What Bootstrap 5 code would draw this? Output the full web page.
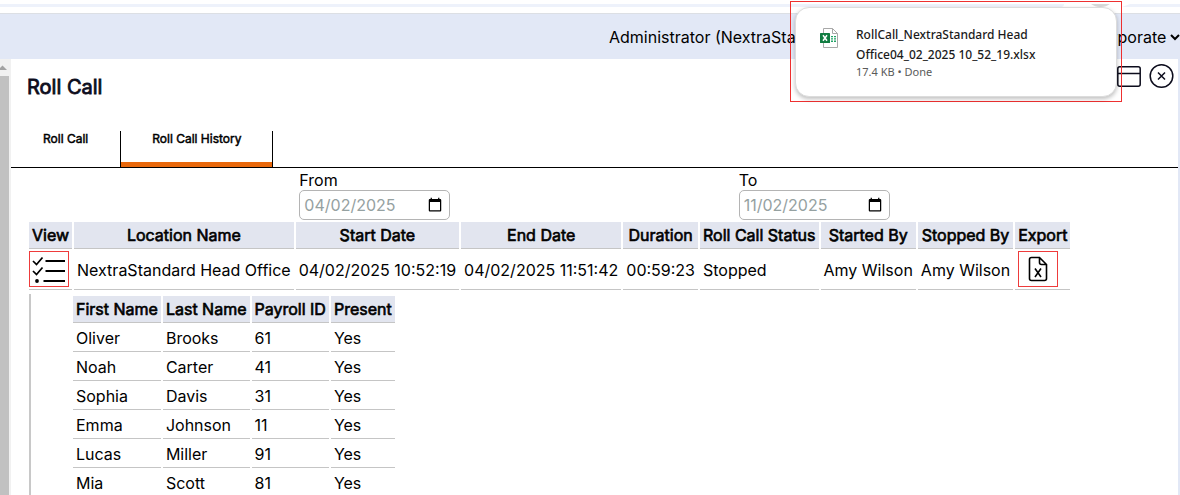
<!DOCTYPE html>
<html lang="en">
<head>
<meta charset="utf-8">
<meta name="viewport" content="width=device-width, initial-scale=1">
<title>Roll Call</title>
<link href="https://cdn.jsdelivr.net/npm/bootstrap@5.3.0/dist/css/bootstrap.min.css" rel="stylesheet">
<style>
  body { font-family: Inter, "Liberation Sans", sans-serif; font-size: 16px; line-height: 24px; color: #000; background: #fff; }
  .shell { height: 100vh; }
  .chrome-strip { height: 14px; border-bottom: 1px solid #dcdfe4; padding-top: 4px; }
  .strip-line { height: 3px; background: #eef2fb; border-radius: 0 0 12px 0; }
  .strip-end { width: 116px; height: 3px; }
  .topbar { height: 45px; background: #e2e8f6; }
  .user-name { width: 477px; }
  .site-select { border: 0; background: transparent; color: #000; padding: 0; margin-right: -3px; }
  .scroll-rail { width: 11px; background: #f1f1f1; }
  .scroll-thumb { width: 9px; background: #c1c1c1; }
  .scroll-up { width: 9px; height: 17px; }
  .main-pane { border-right: 2px solid #e2e8f6; min-width: 0; }
  .faux-bold { font-weight: 400; -webkit-text-stroke: .04em currentColor; }
  .page-title { font-size: 20px; line-height: 24px; color: #0c0c1c; margin: 0; padding-top: 12px; }
  .head-row { height: 72px; padding: 4px 4px 0 16px; }
  .tool-btn { border: 0; background: none; padding: 0; line-height: 0; }
  .tab-strip { height: 37px; border-bottom: 1px solid #000; }
  .tab-btn { display: block; border: 0; background: none; padding: 0 32px 15px; font-size: 12px; line-height: 16px; color: #000; height: 36px; border-bottom: 5px solid transparent; }
  .tab-btn.current { border-bottom-color: #e8680c; padding-left: 31px; padding-right: 31px; }
  .tab-cell { border: solid #000; border-width: 0 1px; }
  .filter-form { padding-top: 2px; }
  .filter-label { line-height: 20px; }
  .date-box { width: 151px; height: 30px; border: 1px solid #b4b4b4; border-radius: 5px; padding: 0 4px; color: #95a1a1; background: #fff; }
  .grid-table { border-collapse: separate; border-spacing: 2px; white-space: nowrap; }
  .grid-table th, .grid-table td { padding: 1px 3px; border-bottom: 1px solid #c5c5c5; }
  .grid-table th { background: #e2e5ef; text-align: center; }
  .grid-table .session td { height: 39px; }
  .grid-table .session .action-cell { padding: 0 0 0 3px; vertical-align: top; }
  .grid-table .session .action-cell:first-child { padding-left: 0; }
  .icon-btn { border: 1px solid #ee3b3b; background: none; padding: 0; width: 40px; height: 36px; }
  .detail { border-left: 2px solid #c8c8c8; margin: 2px 0 0 18px; padding-left: 40px; height: 100%; }
  .download-frame { position: absolute; top: 1px; right: 58px; width: 332px; height: 101px; border: 1px solid #ee3030; padding: 5px 4px; }
  .download-card { height: 90px; border: 1px solid #dcdcdc; border-radius: 14px; background: #fff; box-shadow: 0 2px 4px rgba(0,0,0,.25); padding: 17px 24px 0; gap: 18px; font-family: "Noto Sans", sans-serif; font-size: 12px; line-height: 20px; }
  .file-icon { margin-top: 3px; }
  .download-name { font-weight: 500; color: #1b1b1b; }
  .download-meta { font-size: 11px; line-height: 14px; color: #5a5a5a; }
</style>
</head>
<body>
<div class="shell d-flex flex-column overflow-hidden position-relative">
  <div class="chrome-strip d-flex flex-shrink-0">
    <div class="strip-line flex-grow-1"></div>
    <svg class="strip-end flex-shrink-0" viewBox="0 0 116 3"><path d="M27 0h19q-4 3-9.500 3T27 0z" fill="#d8d8d8"/><path d="M66 0h50v3H58z" fill="#eef2fb"/></svg>
  </div>
  <header class="topbar d-flex align-items-center justify-content-end flex-shrink-0">
    <span class="user-name">Administrator (NextraStandard)</span>
    <select class="site-select" aria-label="Site"><option>Corporate</option></select>
  </header>
  <div class="d-flex flex-grow-1 overflow-hidden">
    <div class="scroll-rail d-flex flex-column flex-shrink-0">
      <svg class="scroll-up" viewBox="0 0 9 17"><path d="M-2 11 2.500 6.500 7 11z" fill="#a3a3a3"/></svg>
      <div class="scroll-thumb flex-grow-1"></div>
    </div>
    <main class="main-pane d-flex flex-column flex-grow-1">
      <div class="head-row d-flex justify-content-between align-items-start flex-shrink-0">
        <h1 class="page-title faux-bold">Roll Call</h1>
        <div class="d-flex gap-2">
          <button type="button" class="tool-btn" aria-label="Window"><svg width="24" height="26" viewBox="0 0 24 26" fill="none" stroke="#0c0c1c" stroke-width="1.500"><rect x=".8" y="3.800" width="22.400" height="19.400" rx="2"/><path d="M1 10.500h22"/></svg></button>
          <button type="button" class="tool-btn" aria-label="Close"><svg width="25" height="26" viewBox="0 0 25 26" fill="none" stroke="#0c0c1c" stroke-width="1.500"><circle cx="12.500" cy="13" r="11.300"/><path d="m9 9.500 7 7m0-7-7 7"/></svg></button>
        </div>
      </div>
      <nav class="tab-strip d-flex flex-shrink-0">
        <button type="button" class="tab-btn faux-bold">Roll Call</button>
        <div class="tab-cell"><button type="button" class="tab-btn current faux-bold">Roll Call History</button></div>
      </nav>
      <form class="filter-form d-flex justify-content-evenly flex-shrink-0">
        <div class="d-flex flex-column"><label class="filter-label" for="from">From</label><input class="date-box" type="date" id="from" value="2025-04-02"></div>
        <div class="d-flex flex-column"><label class="filter-label" for="to">To</label><input class="date-box" type="date" id="to" value="2025-11-02"></div>
      </form>
      <div class="ps-3 flex-shrink-0">
        <table class="grid-table">
          <thead><tr><th class="faux-bold">View</th><th class="faux-bold">Location Name</th><th class="faux-bold">Start Date</th><th class="faux-bold">End Date</th><th class="faux-bold">Duration</th><th class="faux-bold">Roll Call Status</th><th class="faux-bold">Started By</th><th class="faux-bold">Stopped By</th><th class="faux-bold">Export</th></tr></thead>
          <tbody><tr class="session">
            <td class="action-cell"><button type="button" class="icon-btn d-flex align-items-center justify-content-center" aria-label="View"><svg width="34" height="28" viewBox="0 0 34 28" fill="none" stroke="#000" stroke-width="2"><path d="M13.500 6H33M13.500 16H33M11.500 26H33" /><path d="m1 6 3.500 3.500L10.500 2.500M1 16l3.500 3.500 6-7" stroke-width="1.700"/><circle cx="5" cy="26" r="1.900" fill="#000" stroke="none"/></svg></button></td>
            <td>NextraStandard Head Office</td><td>04/02/2025 10:52:19</td><td>04/02/2025 11:51:42</td><td>00:59:23</td><td>Stopped</td><td>Amy Wilson</td><td>Amy Wilson</td>
            <td class="action-cell"><button type="button" class="icon-btn d-flex align-items-center justify-content-center" aria-label="Export"><svg width="20" height="26" viewBox="0 0 20 26" fill="none" stroke="#000" stroke-width="1.600"><path d="M11.500 1.500H3.500Q1.500 1.500 1.500 3.500v19q0 2 2 2h13q2 0 2-2V8.500zM11.500 1.500v5q0 2 2 2h5M7 12.500l6 8.500m0-8.500L7 21"/></svg></button></td>
          </tr></tbody>
        </table>
      </div>
      <div class="detail">
        <table class="grid-table">
          <thead><tr><th class="faux-bold">First Name</th><th class="faux-bold">Last Name</th><th class="faux-bold">Payroll ID</th><th class="faux-bold">Present</th></tr></thead>
          <tbody>
            <tr><td>Oliver</td><td>Brooks</td><td>61</td><td>Yes</td></tr>
            <tr><td>Noah</td><td>Carter</td><td>41</td><td>Yes</td></tr>
            <tr><td>Sophia</td><td>Davis</td><td>31</td><td>Yes</td></tr>
            <tr><td>Emma</td><td>Johnson</td><td>11</td><td>Yes</td></tr>
            <tr><td>Lucas</td><td>Miller</td><td>91</td><td>Yes</td></tr>
            <tr><td>Mia</td><td>Scott</td><td>81</td><td>Yes</td></tr>
          </tbody>
        </table>
      </div>
    </main>
  </div>
  <div class="download-frame">
    <div class="download-card d-flex align-items-start">
      <svg class="file-icon flex-shrink-0" width="18" height="20" viewBox="0 0 18 20"><path d="M3.500.5h9l5 5v14h-14z" fill="#fff" stroke="#a8a8a8"/><path d="M12.500.5v5h5" fill="none" stroke="#a8a8a8"/><path d="M11 8h2v1.300h-2zm3 0h2v1.300h-2zm-3 2.300h2v1.300h-2zm3 0h2v1.300h-2zm-3 2.300h2v1.300h-2zm3 0h2v1.300h-2z" fill="#21a366"/><rect y="5" width="10" height="10" rx=".6" fill="#107c41"/><path d="m3 7.300 4 5.400m0-5.400-4 5.400" stroke="#fff" stroke-width="1.500"/></svg>
      <div>
        <div class="download-name">RollCall_NextraStandard Head<br>Office04_02_2025 10_52_19.xlsx</div>
        <div class="download-meta">17.4 KB • Done</div>
      </div>
    </div>
  </div>
</div>
<script src="https://cdn.jsdelivr.net/npm/bootstrap@5.3.0/dist/js/bootstrap.bundle.min.js"></script>
</body>
</html>
